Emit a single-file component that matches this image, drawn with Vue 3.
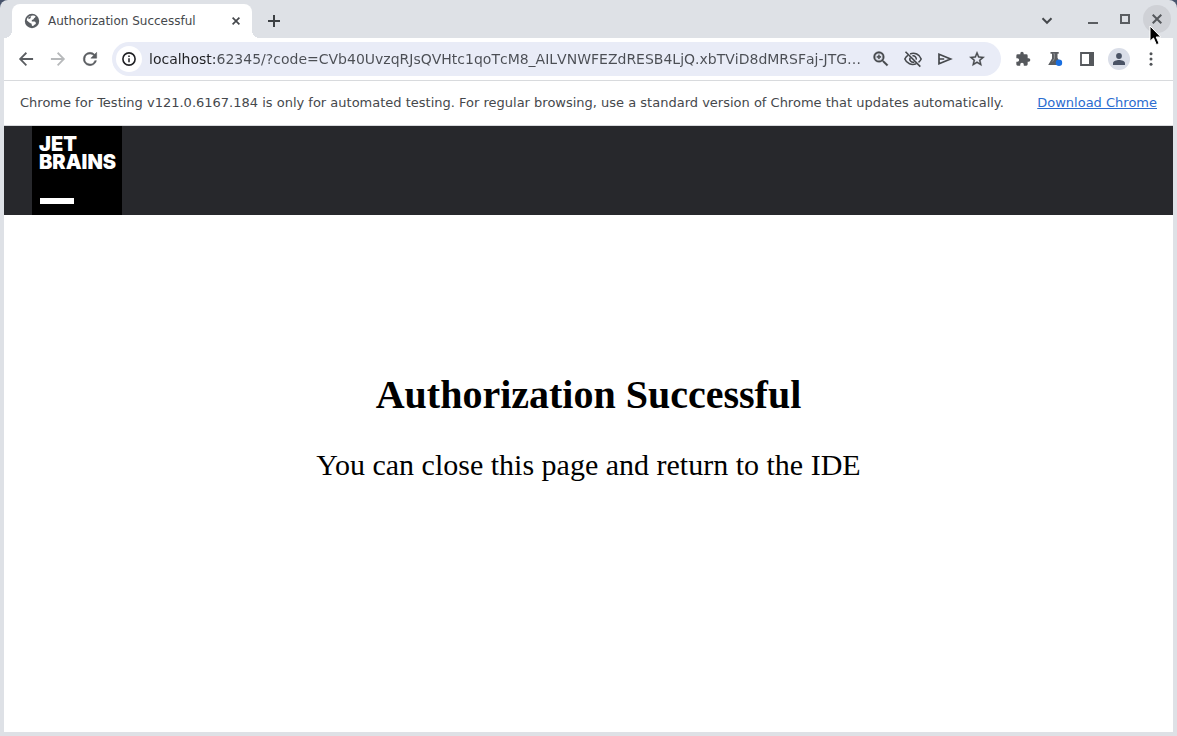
<script setup>
import { ref } from 'vue'

const url = ref(
  'localhost:62345/?code=CVb40UvzqRJsQVHtc1qoTcM8_AILVNWFEZdRESB4LjQ.xbTViD8dMRSFaj-JTG…'
)
</script>

<template>
  <div class="window">
    <header class="tabstrip">
      <div class="tab">
        <svg class="favicon" viewBox="0 0 16 16" aria-hidden="true">
          <circle cx="8" cy="8" r="7.2" fill="#5a5e63" />
          <path d="M7.800 2.700c1.200-.5 2.600-.4 3.500.4.500 1-.2 1.900-1.300 2.100-.3 1-.9 1.700-2.200 1.800v1.600h2.600c1.200.3 1.500 1.200 1.400 2.300-1.500.5-1.800 1.500-3.200 2.200-.9-.5-1-1.400-.9-2.400-1.700-.4-3-1.600-5-3.500A5.400 5.400 0 0 1 7.800 2.700z" fill="#fff" />
          <path d="M4.200 4.200 7.200 3 6.500 5.300 4.600 6.200z" fill="#5a5e63" />
        </svg>
        <span class="tab-title">Authorization Successful</span>
        <button class="tab-close" aria-label="Close tab">
          <svg width="8" height="8" viewBox="0 0 8 8"><path d="M.6.6l6.8 6.8M7.4.6.6 7.4" stroke="#45484c" stroke-width="1.7" /></svg>
        </button>
      </div>
      <button class="new-tab" aria-label="New tab">
        <svg width="12" height="12" viewBox="0 0 12 12"><path d="M6 0v12M0 6h12" stroke="#3c4043" stroke-width="2" /></svg>
      </button>
      <div class="controls">
        <button class="control search-tabs" aria-label="Search tabs">
          <svg width="12" height="8" viewBox="0 0 12 8"><path d="M1.500 1.300 6 5.800l4.500-4.500" fill="none" stroke="#45484c" stroke-width="2" /></svg>
        </button>
        <button class="control" aria-label="Minimize">
          <svg width="10" height="10" viewBox="0 0 10 10"><path d="M0 9h10" stroke="#5a5d61" stroke-width="2" /></svg>
        </button>
        <button class="control" aria-label="Maximize">
          <svg width="10" height="10" viewBox="0 0 10 10"><path d="M1 1h8v8H1z" fill="none" stroke="#5a5d61" stroke-width="2" /></svg>
        </button>
        <button class="control close" aria-label="Close">
          <span class="close-disc">
            <svg width="10" height="10" viewBox="0 0 10 10"><path d="M.7.7l8.600 8.600M9.300.7.7 9.300" stroke="#55585c" stroke-width="2" /></svg>
          </span>
          <svg class="pointer" width="13" height="21" viewBox="0 0 13 21" aria-hidden="true">
            <path d="M1 1v15.200l3.500-3.200 2.900 6.700 2.700-1.200-2.900-6.500h4.600z" fill="#000" stroke="#fff" stroke-width="1" />
          </svg>
        </button>
      </div>
    </header>

    <nav class="toolbar">
      <button class="tool" aria-label="Back">
        <svg width="20" height="20" viewBox="0 0 24 24"><path fill="#5a5d61" d="M20.500 10.750H7.700l5.500-5.500L11.700 3.500 3.500 12l8.200 8.500 1.500-1.700-5.500-5.550h12.800z" /></svg>
      </button>
      <button class="tool" aria-label="Forward">
        <svg width="20" height="20" viewBox="0 0 24 24"><path fill="#b7b9bb" d="M3.500 10.750h12.800l-5.500-5.500 1.500-1.750 8.200 8.500-8.200 8.500-1.500-1.700 5.500-5.550H3.500z" /></svg>
      </button>
      <button class="tool" aria-label="Reload">
        <svg width="20" height="20" viewBox="0 0 24 24"><path fill="#5a5d61" stroke="#5a5d61" stroke-width=".6" d="M17.650 6.350A7.960 7.960 0 0 0 12 4a8 8 0 1 0 7.730 10h-2.080A6 6 0 1 1 12 6c1.660 0 3.140.69 4.220 1.780L13 11h7V4z" /></svg>
      </button>

      <div class="omnibox">
        <button class="site-info" aria-label="View site information">
          <svg width="14" height="14" viewBox="0 0 14 14"><circle cx="7" cy="7" r="6.100" fill="none" stroke="#202124" stroke-width="1.600" /><path d="M7 6.200v4.100M7 3.600v1.500" stroke="#202124" stroke-width="1.500" /></svg>
        </button>
        <input v-model="url" class="url" type="text" aria-label="Address and search bar" spellcheck="false" />
        <button class="tool" aria-label="Zoom">
          <svg width="20" height="20" viewBox="0 0 24 24"><path fill="#45484c" stroke="#45484c" stroke-width=".4" d="M15.500 14h-.79l-.28-.27A6.470 6.470 0 0 0 16 9.500 6.500 6.500 0 1 0 9.500 16c1.610 0 3.090-.59 4.230-1.570l.27.28v.79l5 4.990L20.490 19zm-6 0a4.500 4.500 0 1 1 0-9 4.500 4.500 0 0 1 0 9zM10.200 7H8.800v1.800H7v1.400h1.800V12h1.400v-1.800H12V8.800h-1.800z" /></svg>
        </button>
        <button class="tool" aria-label="Third-party cookies blocked">
          <svg width="20" height="20" viewBox="0 0 24 24" fill="none" stroke="#45484c" stroke-width="1.900"><path d="M8.500 5.900A10 10 0 0 1 21.800 12a10.800 10.800 0 0 1-3.200 4.100M15.800 17.700A10.200 10.200 0 0 1 2.200 12a10.800 10.800 0 0 1 3.600-4.400M3 3.300l17.800 17.800M11.300 8.100a4 4 0 0 1 4.600 4.700M8.400 10.500a4 4 0 0 0 5.100 5.200" /></svg>
        </button>
        <button class="tool" aria-label="Share this page">
          <svg width="16" height="14" viewBox="0 0 16 14"><path d="M2 2.200v9.600L13.600 7zM2 7h5.200" fill="none" stroke="#45484c" stroke-width="1.700" /></svg>
        </button>
        <button class="tool" aria-label="Bookmark this tab">
          <svg width="18" height="18" viewBox="0 0 24 24"><path fill="#45484c" stroke="#45484c" stroke-width=".5" d="m22 9.240-7.190-.62L12 2 9.190 8.630 2 9.240l5.460 4.730L5.820 21 12 17.270 18.180 21l-1.630-7.030zM12 15.400l-3.760 2.270 1-4.280-3.320-2.880 4.380-.38L12 6.100l1.710 4.040 4.380.38-3.320 2.880 1 4.280z" /></svg>
        </button>
      </div>

      <button class="tool" aria-label="Extensions">
        <svg width="16" height="16" viewBox="0 0 24 24"><path fill="#55585c" d="M20.500 11H19V7a2 2 0 0 0-2-2h-4V3.500a2.500 2.500 0 0 0-5 0V5H4a2 2 0 0 0-1.990 2v3.800H3.500a2.700 2.700 0 0 1 0 5.400H2V20a2 2 0 0 0 2 2h3.800v-1.500a2.700 2.700 0 0 1 5.400 0V22H17a2 2 0 0 0 2-2v-4h1.500a2.500 2.500 0 0 0 0-5z" /></svg>
      </button>
      <button class="tool" aria-label="Experiments">
        <svg width="16" height="16" viewBox="0 0 16 16"><path d="M3.500 1h8.200v1.800h-1.200v4l3.800 7.200H1.200L5 7.400V2.800H3.500z" fill="#5a5d61" /><path d="M6.400 2.800h1v4.800l-1.800 2.900" fill="none" stroke="#a5a8ab" stroke-width=".7" /><circle cx="12" cy="11.700" r="3.200" fill="#1a6fe0" /></svg>
      </button>
      <button class="tool" aria-label="Side panel">
        <svg width="14" height="14" viewBox="0 0 14 14"><path d="M1 1h12v12H1z" fill="none" stroke="#55585c" stroke-width="1.800" /><path d="M9 0h5v14H9z" fill="#55585c" /></svg>
      </button>
      <button class="tool" aria-label="Profile">
        <span class="avatar">
          <svg width="12" height="12" viewBox="0 0 12 12" fill="#4a5365"><circle cx="6" cy="3" r="2.900" /><path d="M0 12v-1.700C0 8.200 3.500 7.100 6 7.100s6 1.100 6 3.200V12z" /></svg>
        </span>
      </button>
      <button class="tool" aria-label="Menu">
        <svg width="4" height="14" viewBox="0 0 4 14" fill="#505357"><circle cx="2" cy="1.700" r="1.500" /><circle cx="2" cy="7" r="1.500" /><circle cx="2" cy="12.300" r="1.500" /></svg>
      </button>
    </nav>

    <aside class="infobar">
      <span>Chrome for Testing v121.0.6167.184 is only for automated testing. For regular browsing, use a standard version of Chrome that updates automatically.</span>
      <a href="#">Download Chrome</a>
    </aside>

    <main class="page">
      <div class="banner">
        <div class="logo">
          <span>JET</span>
          <span>BRAINS</span>
          <i class="logo-bar"></i>
        </div>
      </div>
      <section class="message">
        <h1>Authorization Successful</h1>
        <p>You can close this page and return to the IDE</p>
      </section>
    </main>
  </div>
</template>

<style>
body {
  margin: 0;
  background: #48546c;
}
</style>

<style scoped>
.window {
  box-sizing: border-box;
  display: flex;
  flex-direction: column;
  min-height: 100vh;
  padding: 0 4px 4px;
  background: #dee1e6;
  border-radius: 8px 8px 0 0;
  font-family: "DejaVu Sans", sans-serif;
}

button {
  display: flex;
  align-items: center;
  justify-content: center;
  flex: none;
  padding: 0;
  border: 0;
  background: none;
}

svg {
  display: block;
}

.tabstrip {
  display: flex;
  align-items: flex-end;
  height: 38px;
  padding-left: 8px;
}

.tab {
  position: relative;
  box-sizing: border-box;
  display: flex;
  align-items: center;
  width: 240px;
  height: 34px;
  padding: 0 8px 0 12px;
  background: #fff;
  border-radius: 8px 8px 0 0;
}

.tab::before,
.tab::after {
  content: "";
  position: absolute;
  bottom: 0;
  width: 8px;
  height: 8px;
}

.tab::before {
  right: 100%;
  background: radial-gradient(circle at 0 0, transparent 8px, #fff 8px);
}

.tab::after {
  left: 100%;
  background: radial-gradient(circle at 100% 0, transparent 8px, #fff 8px);
}

.favicon {
  width: 16px;
  height: 16px;
  margin-right: 8px;
}

.tab-title {
  flex: 1;
  color: #45484c;
  font-size: 12px;
  white-space: nowrap;
}

.tab-close {
  width: 16px;
  height: 16px;
}

.new-tab {
  width: 28px;
  height: 34px;
  margin-left: 8px;
}

.controls {
  display: flex;
  align-self: stretch;
  margin-left: auto;
}

.control {
  width: 32px;
  height: 38px;
}

.search-tabs {
  margin-right: 14px;
  padding-top: 4px;
}

.close {
  position: relative;
}

.close-disc {
  display: flex;
  align-items: center;
  justify-content: center;
  width: 28px;
  height: 28px;
  border-radius: 50%;
  background: #cfd1d6;
}

.pointer {
  position: absolute;
  top: 25px;
  left: 8px;
}

.toolbar {
  display: flex;
  align-items: center;
  height: 42px;
  padding: 0 6px;
  background: #fff;
  border-bottom: 1px solid #d8dadd;
}

.tool {
  width: 32px;
  height: 34px;
}

.omnibox {
  box-sizing: border-box;
  display: flex;
  align-items: center;
  flex: 1;
  min-width: 0;
  height: 34px;
  margin: 0 6px;
  padding: 0 8px 0 4px;
  border-radius: 17px;
  background: #e9ecf7;
}

.site-info {
  width: 26px;
  height: 26px;
  border-radius: 50%;
  background: #fff;
}

.url {
  flex: 1;
  min-width: 0;
  margin: 0 0 0 7px;
  padding: 0;
  border: 0;
  outline: 0;
  background: linear-gradient(90deg, #202124 66px, #4b4e54 66px) text;
  color: transparent;
  caret-color: #202124;
  font: 14px "DejaVu Sans", sans-serif;
  font-kerning: none;
}

.avatar {
  display: flex;
  align-items: center;
  justify-content: center;
  width: 22px;
  height: 22px;
  border-radius: 50%;
  background: #dadee8;
}

.infobar {
  display: flex;
  align-items: center;
  justify-content: space-between;
  box-sizing: border-box;
  height: 45px;
  padding: 0 16px 2px;
  background: #fff;
  border-bottom: 1px solid #d8dadd;
  color: #45484c;
  font-size: 13px;
}

.infobar a {
  color: #2b6cd0;
  white-space: nowrap;
}

.page {
  flex: 1;
  background: #fff;
}

.banner {
  display: flex;
  height: 89px;
  padding-left: 28px;
  background: #27282c;
}

.logo {
  box-sizing: border-box;
  display: flex;
  flex-direction: column;
  width: 90px;
  padding: 9px 7px;
  background: #000;
  color: #fff;
  font: 900 20px/18px Inter, sans-serif;
}

.logo-bar {
  width: 34px;
  height: 6px;
  margin: 27px 0 0 1px;
  background: #fff;
}

.message {
  padding-top: 157px;
  color: #000;
  font-family: "Liberation Serif", serif;
  text-align: center;
}

h1 {
  margin: 0;
  font-size: 40px;
  line-height: 46px;
}

p {
  margin: 30px 0 0;
  font-size: 30px;
  line-height: 34px;
}
</style>
